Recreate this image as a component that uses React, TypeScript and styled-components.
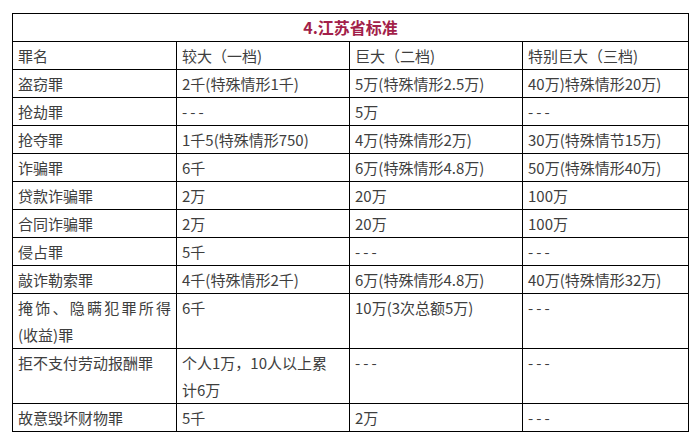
import styled, { createGlobalStyle } from "styled-components";

const GlobalStyle = createGlobalStyle`
  body {
    margin: 0;
    background: #ffffff;
    font-family: "Noto Sans CJK SC", "Noto Sans", sans-serif;
  }
`;

type Row = {
  name: string;
  first: React.ReactNode;
  second: string;
  third: string;
};

const NONE = "---";

const rows: Row[] = [
  { name: "盗窃罪", first: "2千(特殊情形1千)", second: "5万(特殊情形2.5万)", third: "40万)特殊情形20万)" },
  { name: "抢劫罪", first: NONE, second: "5万", third: NONE },
  { name: "抢夺罪", first: "1千5(特殊情形750)", second: "4万(特殊情形2万)", third: "30万(特殊情节15万)" },
  { name: "诈骗罪", first: "6千", second: "6万(特殊情形4.8万)", third: "50万(特殊情形40万)" },
  { name: "贷款诈骗罪", first: "2万", second: "20万", third: "100万" },
  { name: "合同诈骗罪", first: "2万", second: "20万", third: "100万" },
  { name: "侵占罪", first: "5千", second: NONE, third: NONE },
  { name: "敲诈勒索罪", first: "4千(特殊情形2千)", second: "6万(特殊情形4.8万)", third: "40万(特殊情形32万)" },
  { name: "掩饰、隐瞒犯罪所得(收益)罪", first: "6千", second: "10万(3次总额5万)", third: NONE },
  {
    name: "拒不支付劳动报酬罪",
    first: (
      <>
        个人1万，10人以上累
        <br />
        计6万
      </>
    ),
    second: NONE,
    third: NONE,
  },
  { name: "故意毁坏财物罪", first: "5千", second: "2万", third: NONE },
];

const Page = styled.div`
  padding: 13px 0 0 12px;
`;

const Table = styled.table`
  width: 676px;
  border-collapse: collapse;
  table-layout: fixed;
  color: #3e3e3e;
  font-size: 15px;
`;

const Cell = styled.td`
  border: 1px solid #000;
  padding: 0 5px;
  line-height: 27px;
  vertical-align: top;
  text-align: justify;
  word-break: break-all;
`;

const TitleCell = styled.td`
  border: 1px solid #000;
  padding: 0 5px;
  line-height: 27px;
  text-align: center;
  font-size: 16px;
  font-weight: 700;
  color: #a31f4a;
`;

const Dash = styled.span`
  letter-spacing: 3px;
`;

const show = (value: React.ReactNode) =>
  value === NONE ? <Dash>{NONE}</Dash> : value;

export default function App() {
  return (
    <>
      <GlobalStyle />
      <Page>
        <Table>
          <colgroup>
            <col style={{ width: 164 }} />
            <col style={{ width: 173 }} />
            <col style={{ width: 173 }} />
            <col style={{ width: 166 }} />
          </colgroup>
          <tbody>
            <tr>
              <TitleCell colSpan={4}>4.江苏省标准</TitleCell>
            </tr>
            <tr>
              <Cell>罪名</Cell>
              <Cell>较大（一档)</Cell>
              <Cell>巨大（二档)</Cell>
              <Cell>特别巨大（三档)</Cell>
            </tr>
            {rows.map((row) => (
              <tr key={row.name}>
                <Cell>{row.name}</Cell>
                <Cell>{show(row.first)}</Cell>
                <Cell>{show(row.second)}</Cell>
                <Cell>{show(row.third)}</Cell>
              </tr>
            ))}
          </tbody>
        </Table>
      </Page>
    </>
  );
}
